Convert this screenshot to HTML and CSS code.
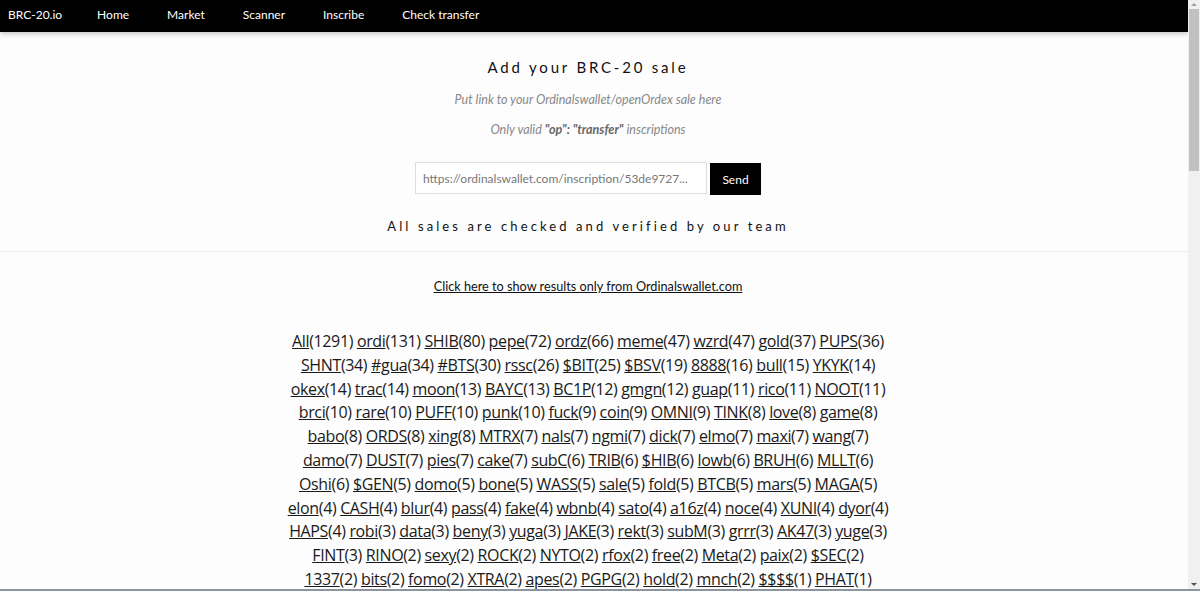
FILE: index.html
```html
<!DOCTYPE html>
<html lang="en">
<head>
  <meta charset="UTF-8">
  <title>BRC-20.io - Add your sale</title>
  <meta name="viewport" content="width=device-width, initial-scale=1.0">
  <link rel="stylesheet" href="styles.css">
</head>
<body>
  <nav class="topbar">
    <a class="brand" href="#">BRC-20.io</a>
    <a class="nav-link" href="#">Home</a>
    <a class="nav-link" href="#">Market</a>
    <a class="nav-link" href="#">Scanner</a>
    <a class="nav-link" href="#">Inscribe</a>
    <a class="nav-link" href="#">Check transfer</a>
  </nav>

  <section class="add-sale">
    <h2>Add your BRC-20 sale</h2>
    <p class="hint first">Put link to your Ordinalswallet/openOrdex sale here</p>
    <p class="hint">Only valid <b>"op": "transfer"</b> inscriptions</p>

    <form class="sale-form" onsubmit="return false">
      <input type="text" id="saleLink" placeholder="https://ordinalswallet.com/inscription/53de9727...">
      <button type="submit" class="send-btn">Send</button>
    </form>

    <p class="verified">All sales are checked and verified by our team</p>
  </section>

  <section class="results">
    <a class="filter-link" href="#">Click here to show results only from Ordinalswallet.com</a>

    <div class="tags">
      <span><a href="#">All</a>(1291)</span>
      <span><a href="#">ordi</a>(131)</span>
      <span><a href="#">SHIB</a>(80)</span>
      <span><a href="#">pepe</a>(72)</span>
      <span><a href="#">ordz</a>(66)</span>
      <span><a href="#">meme</a>(47)</span>
      <span><a href="#">wzrd</a>(47)</span>
      <span><a href="#">gold</a>(37)</span>
      <span><a href="#">PUPS</a>(36)</span>
      <span><a href="#">SHNT</a>(34)</span>
      <span><a href="#">#gua</a>(34)</span>
      <span><a href="#">#BTS</a>(30)</span>
      <span><a href="#">rssc</a>(26)</span>
      <span><a href="#">$BIT</a>(25)</span>
      <span><a href="#">$BSV</a>(19)</span>
      <span><a href="#">8888</a>(16)</span>
      <span><a href="#">bull</a>(15)</span>
      <span><a href="#">YKYK</a>(14)</span>
      <span><a href="#">okex</a>(14)</span>
      <span><a href="#">trac</a>(14)</span>
      <span><a href="#">moon</a>(13)</span>
      <span><a href="#">BAYC</a>(13)</span>
      <span><a href="#">BC1P</a>(12)</span>
      <span><a href="#">gmgn</a>(12)</span>
      <span><a href="#">guap</a>(11)</span>
      <span><a href="#">rico</a>(11)</span>
      <span><a href="#">NOOT</a>(11)</span>
      <span><a href="#">brci</a>(10)</span>
      <span><a href="#">rare</a>(10)</span>
      <span><a href="#">PUFF</a>(10)</span>
      <span><a href="#">punk</a>(10)</span>
      <span><a href="#">fuck</a>(9)</span>
      <span><a href="#">coin</a>(9)</span>
      <span><a href="#">OMNI</a>(9)</span>
      <span><a href="#">TINK</a>(8)</span>
      <span><a href="#">love</a>(8)</span>
      <span><a href="#">game</a>(8)</span>
      <span><a href="#">babo</a>(8)</span>
      <span><a href="#">ORDS</a>(8)</span>
      <span><a href="#">xing</a>(8)</span>
      <span><a href="#">MTRX</a>(7)</span>
      <span><a href="#">nals</a>(7)</span>
      <span><a href="#">ngmi</a>(7)</span>
      <span><a href="#">dick</a>(7)</span>
      <span><a href="#">elmo</a>(7)</span>
      <span><a href="#">maxi</a>(7)</span>
      <span><a href="#">wang</a>(7)</span>
      <span><a href="#">damo</a>(7)</span>
      <span><a href="#">DUST</a>(7)</span>
      <span><a href="#">pies</a>(7)</span>
      <span><a href="#">cake</a>(7)</span>
      <span><a href="#">subC</a>(6)</span>
      <span><a href="#">TRIB</a>(6)</span>
      <span><a href="#">$HIB</a>(6)</span>
      <span><a href="#">lowb</a>(6)</span>
      <span><a href="#">BRUH</a>(6)</span>
      <span><a href="#">MLLT</a>(6)</span>
      <span><a href="#">Oshi</a>(6)</span>
      <span><a href="#">$GEN</a>(5)</span>
      <span><a href="#">domo</a>(5)</span>
      <span><a href="#">bone</a>(5)</span>
      <span><a href="#">WASS</a>(5)</span>
      <span><a href="#">sale</a>(5)</span>
      <span><a href="#">fold</a>(5)</span>
      <span><a href="#">BTCB</a>(5)</span>
      <span><a href="#">mars</a>(5)</span>
      <span><a href="#">MAGA</a>(5)</span>
      <span><a href="#">elon</a>(4)</span>
      <span><a href="#">CASH</a>(4)</span>
      <span><a href="#">blur</a>(4)</span>
      <span><a href="#">pass</a>(4)</span>
      <span><a href="#">fake</a>(4)</span>
      <span><a href="#">wbnb</a>(4)</span>
      <span><a href="#">sato</a>(4)</span>
      <span><a href="#">a16z</a>(4)</span>
      <span><a href="#">noce</a>(4)</span>
      <span><a href="#">XUNI</a>(4)</span>
      <span><a href="#">dyor</a>(4)</span>
      <span><a href="#">HAPS</a>(4)</span>
      <span><a href="#">robi</a>(3)</span>
      <span><a href="#">data</a>(3)</span>
      <span><a href="#">beny</a>(3)</span>
      <span><a href="#">yuga</a>(3)</span>
      <span><a href="#">JAKE</a>(3)</span>
      <span><a href="#">rekt</a>(3)</span>
      <span><a href="#">subM</a>(3)</span>
      <span><a href="#">grrr</a>(3)</span>
      <span><a href="#">AK47</a>(3)</span>
      <span><a href="#">yuge</a>(3)</span>
      <span><a href="#">FINT</a>(3)</span>
      <span><a href="#">RINO</a>(2)</span>
      <span><a href="#">sexy</a>(2)</span>
      <span><a href="#">ROCK</a>(2)</span>
      <span><a href="#">NYTO</a>(2)</span>
      <span><a href="#">rfox</a>(2)</span>
      <span><a href="#">free</a>(2)</span>
      <span><a href="#">Meta</a>(2)</span>
      <span><a href="#">paix</a>(2)</span>
      <span><a href="#">$SEC</a>(2)</span>
      <span><a href="#">1337</a>(2)</span>
      <span><a href="#">bits</a>(2)</span>
      <span><a href="#">fomo</a>(2)</span>
      <span><a href="#">XTRA</a>(2)</span>
      <span><a href="#">apes</a>(2)</span>
      <span><a href="#">PGPG</a>(2)</span>
      <span><a href="#">hold</a>(2)</span>
      <span><a href="#">mnch</a>(2)</span>
      <span><a href="#">$$$$</a>(1)</span>
      <span><a href="#">PHAT</a>(1)</span>
      <span><a href="#">sats</a>(1)</span>
      <span><a href="#">DOGE</a>(1)</span>
      <span><a href="#">vmpx</a>(1)</span>
      <span><a href="#">BOOK</a>(1)</span>
      <span><a href="#">lite</a>(1)</span>
      <span><a href="#">KEKW</a>(1)</span>
      <span><a href="#">hodl</a>(1)</span>
      <span><a href="#">TURT</a>(1)</span>
    </div>
  </section>

  <!-- browser scrollbar, as it shows in the screenshot -->
  <div class="scrollbar">
    <span class="arrow up"></span>
    <div class="thumb"></div>
    <span class="arrow down"></span>
  </div>
  <div class="window-edge"></div>
</body>
</html>
```

FILE: styles.css
```css
* {
  box-sizing: border-box;
}

body {
  margin: 0 12px 0 0;
  background: #fdfdfd;
  font-family: Lato, 'Liberation Sans', sans-serif;
  color: #111;
}

a {
  color: inherit;
}

.topbar {
  display: flex;
  align-items: center;
  height: 32px;
  padding-bottom: 3px;
  background: #000;
  box-shadow: 0 2px 5px rgba(0,0,0,0.22);
}

.topbar a {
  color: #fff;
  text-decoration: none;
  font-size: 12px;
}

.brand {
  padding: 0 16px 0 8px;
}

.nav-link {
  padding: 0 19px;
}

.add-sale, .results {
  padding-right: 12px;
  text-align: center;
}

.add-sale {
  padding-top: 26px;
  padding-bottom: 17px;
  border-bottom: 1px solid #eee;
}

.add-sale h2 {
  margin: 0;
  font-size: 15px;
  font-weight: 400;
  letter-spacing: 2.8px;
}

.hint {
  margin: 15px 0 0;
  font-size: 12.5px;
  font-style: italic;
  color: #888;
}

.hint.first {
  margin-top: 16px;
}

.hint b {
  color: #666;
}

.sale-form {
  display: flex;
  justify-content: center;
  gap: 3px;
  margin-top: 25px;
}

.sale-form input {
  width: 292px;
  height: 32px;
  padding: 0 7px;
  border: 1px solid #ddd;
  font-family: Lato, sans-serif;
  font-size: 12px;
  background: #fff;
}

.sale-form input::placeholder {
  color: #777;
}

.send-btn {
  width: 51px;
  height: 32px;
  margin-top: 1px;
  border: none;
  background: #000;
  color: #fff;
  font-family: Lato, sans-serif;
  font-size: 12px;
  cursor: pointer;
}

.verified {
  margin: 23px 0 0;
  font-size: 13px;
  letter-spacing: 3.1px;
}

.results {
  padding-top: 23px;
  padding-bottom: 40px;
}

.filter-link {
  font-size: 12.7px;
}

.tags {
  max-width: 604px;
  margin: 36px auto 0;
  font-family: 'Open Sans', sans-serif;
  font-size: 16px;
  letter-spacing: -0.35px;
  line-height: 23.8px;
  color: #1a1a1a;
}

.scrollbar {
  position: fixed;
  top: 0;
  right: 0;
  bottom: 2px;
  width: 12px;
  background: #f0f0f0;
}

.scrollbar .thumb {
  position: absolute;
  top: 9px;
  left: 1px;
  width: 10px;
  height: 162px;
  background: #c1c1c1;
}

.arrow {
  position: absolute;
  left: 3px;
  width: 0;
  height: 0;
  border-left: 3px solid transparent;
  border-right: 3px solid transparent;
}

.arrow.up {
  top: 3px;
  border-bottom: 3px solid #a3a3a3;
}

.arrow.down {
  bottom: 3px;
  border-top: 3px solid #505050;
}

.window-edge {
  position: fixed;
  left: 0;
  right: 0;
  bottom: 0;
  height: 2px;
  background: #8d95a0;
}
```
